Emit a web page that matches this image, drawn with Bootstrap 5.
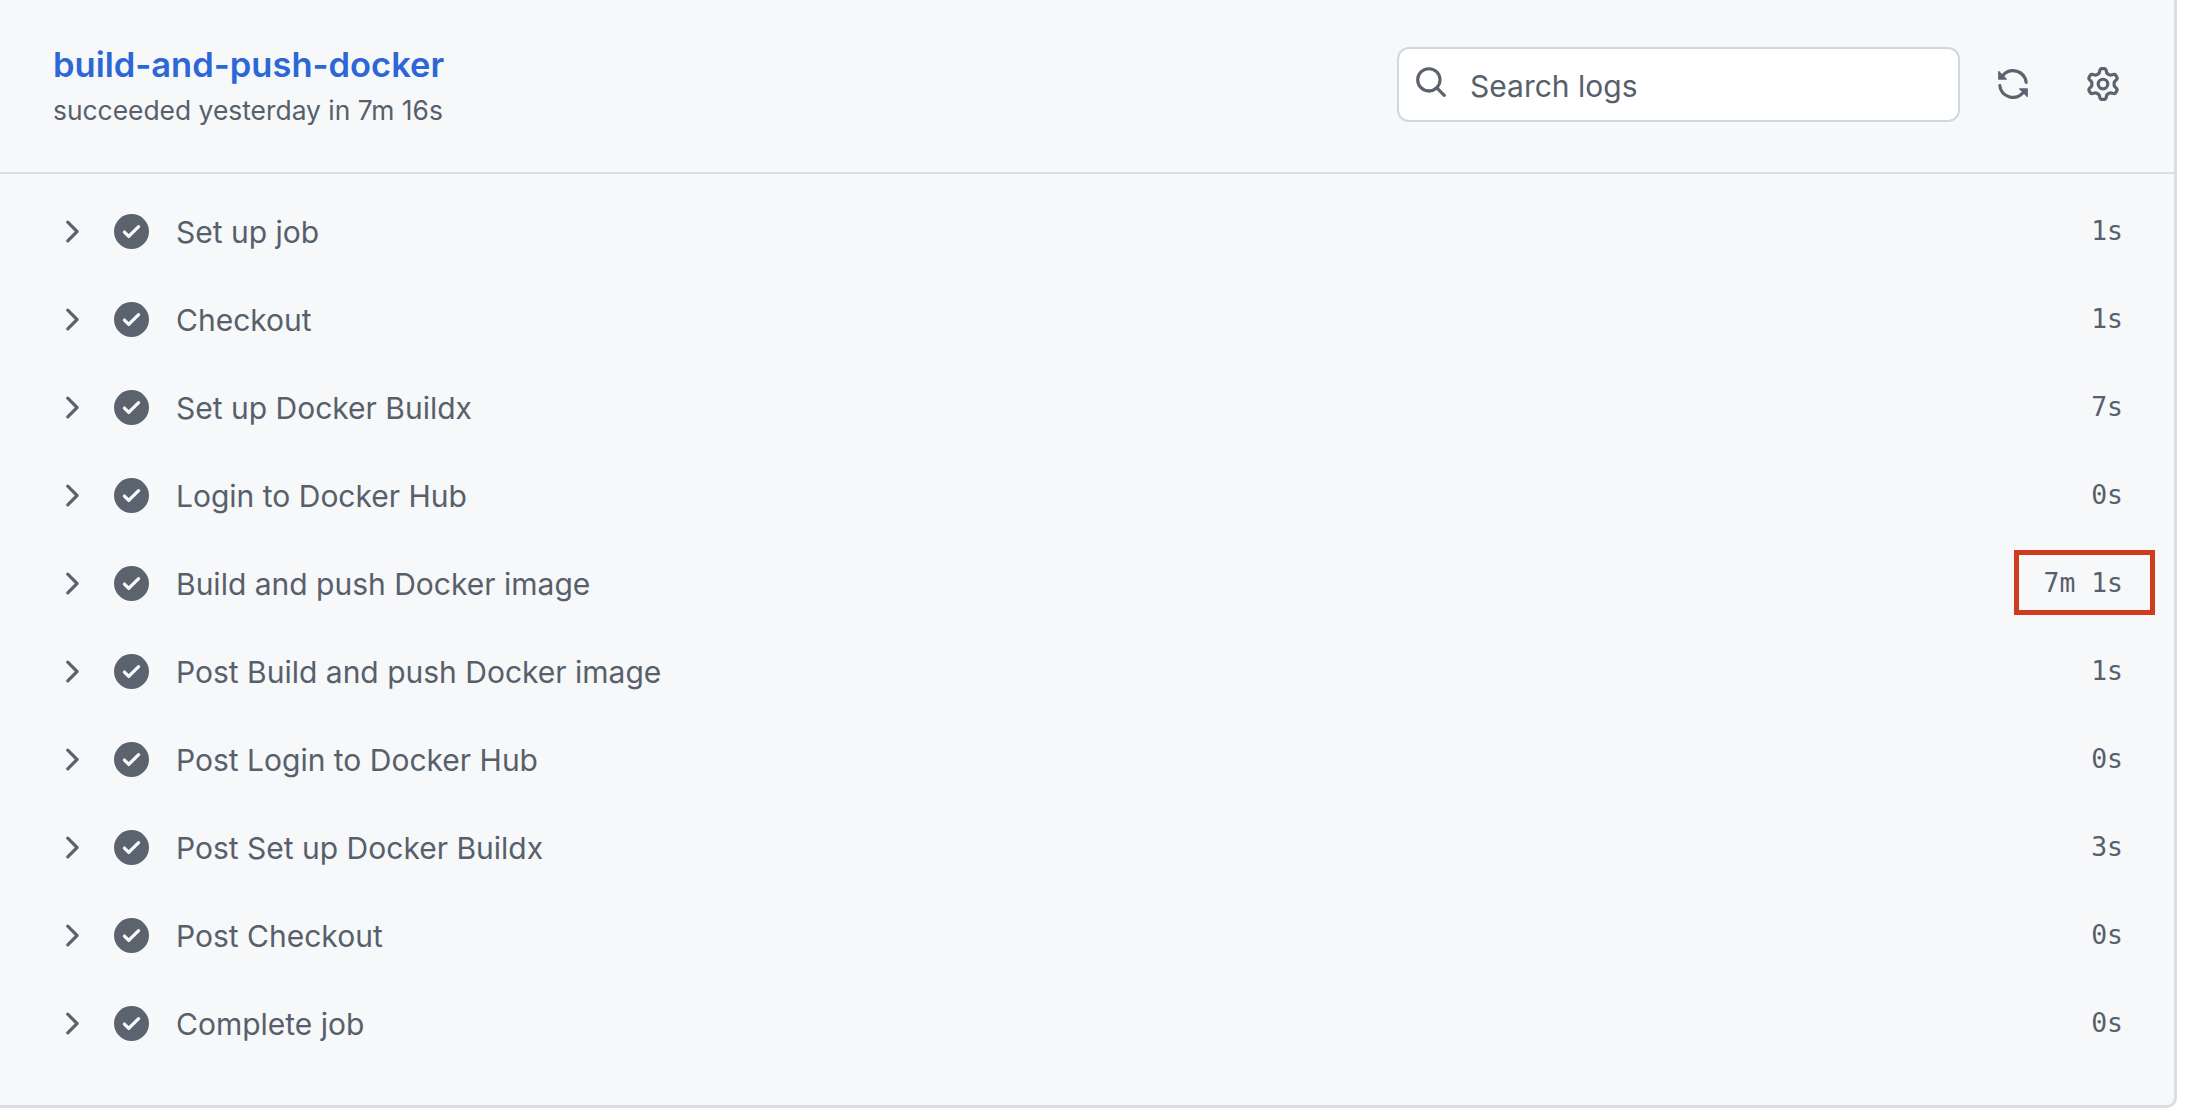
<!DOCTYPE html>
<html lang="en">
<head>
  <meta charset="UTF-8">
  <meta name="viewport" content="width=device-width, initial-scale=1.0">
  <title>build-and-push-docker</title>
  <link rel="stylesheet" href="https://cdn.jsdelivr.net/npm/bootstrap@5.3.0/dist/css/bootstrap.min.css">
  <style>
    html, body { background: #fff; margin: 0; }
    body { font-family: Inter, "Liberation Sans", sans-serif; color: #57606a; }
    .job-panel { width: 2177px; height: 1108px; background: #f6f8fa; border-right: 3px solid #d8dee4; border-bottom: 3px solid #d8dee4; border-bottom-right-radius: 10px; }
    .job-head { height: 174px; padding: 0 54px 0 53px; border-bottom: 2px solid #d8dee4; }
    .job-title { font-size: 34.5px; font-weight: 600; line-height: 44px; color: #2d67d6; margin: 0; text-decoration: none; display: block; }
    .job-sub { font-size: 26.4px; line-height: 45px; padding-top: 1px; }
    .job-text { padding-top: 3px; }
    .job-actions { padding-bottom: 3px; }
    .search-box { width: 563px; height: 75px; }
    .search-box .form-control { height: 75px; border: 2px solid #d0d7de; border-radius: 12px; padding: 2px 16px 0 71px; font-size: 30px; color: #57606a; background: #fff; box-shadow: none; }
    .search-box .form-control::placeholder { color: #57606a; opacity: 1; }
    .search-icon { left: 17px; top: 18px; }
    .job-tools { gap: 56px; margin-left: 36px; margin-bottom: 2px; }
    .step-list { padding: 13px 0 0 0; }
    .step-row { height: 88px; padding: 0 51px 0 53px; background: transparent; border: 0; color: #57606a; font-size: 30px; }
    .step-check { margin: 0 27px 0 26px; }
    .step-name { padding-top: 2px; }
    .step-time { font-family: "DejaVu Sans Mono", "Liberation Mono", monospace; font-size: 26.4px; }
    .red-box { right: 19px; top: 11px; width: 141px; height: 65px; border: 5px solid #d03a1f; }
    svg { fill: #5b646e; display: block; flex: none; }
  </style>
</head>
<body>
  <div class="job-panel">
    <div class="job-head d-flex align-items-center justify-content-between">
      <div class="job-text">
        <a class="job-title" href="#">build-and-push-docker</a>
        <div class="job-sub">succeeded yesterday in 7m 16s</div>
      </div>
      <div class="job-actions d-flex align-items-center">
        <div class="search-box position-relative">
          <svg class="search-icon position-absolute" width="34" height="34" viewBox="0 0 16 16"><path d="M10.68 11.74a6 6 0 0 1-7.922-8.982 6 6 0 0 1 8.982 7.922l3.04 3.04a.749.749 0 0 1-.326 1.275.749.749 0 0 1-.734-.215ZM11.5 7a4.499 4.499 0 1 0-8.997 0A4.499 4.499 0 0 0 11.5 7Z"/></svg>
          <input class="form-control" type="text" placeholder="Search logs">
        </div>
        <div class="job-tools d-flex align-items-center">
          <svg width="34" height="34" viewBox="0 0 16 16"><path d="M1.705 8.005a.75.75 0 0 1 .834.656 5.5 5.5 0 0 0 9.592 2.97l-1.204-1.204a.25.25 0 0 1 .177-.427h3.646a.25.25 0 0 1 .25.25v3.646a.25.25 0 0 1-.427.177l-1.38-1.38A7.002 7.002 0 0 1 1.05 8.84a.75.75 0 0 1 .656-.834ZM8 2.5a5.487 5.487 0 0 0-4.131 1.869l1.204 1.204A.25.25 0 0 1 4.896 6H1.25A.25.25 0 0 1 1 5.75V2.104a.25.25 0 0 1 .427-.177l1.38 1.38A7.002 7.002 0 0 1 14.95 7.16a.75.75 0 0 1-1.49.178A5.5 5.5 0 0 0 8 2.5Z"/></svg>
          <svg width="34" height="34" viewBox="0 0 16 16"><path d="M8 0a8.2 8.2 0 0 1 .701.031C9.444.095 9.99.645 10.16 1.29l.288 1.107c.018.066.079.158.212.224.231.114.454.243.668.386.123.082.233.09.299.071l1.103-.303c.644-.176 1.392.021 1.82.63.27.385.506.792.704 1.218.315.675.111 1.422-.364 1.891l-.814.806c-.049.048-.098.147-.088.294.016.257.016.515 0 .772-.01.147.038.246.088.294l.814.806c.475.469.679 1.216.364 1.891a7.977 7.977 0 0 1-.704 1.217c-.428.61-1.176.807-1.82.63l-1.102-.302c-.067-.019-.177-.011-.3.071a5.909 5.909 0 0 1-.668.386c-.133.066-.194.158-.211.224l-.29 1.106c-.168.646-.715 1.196-1.458 1.26a8.006 8.006 0 0 1-1.402 0c-.743-.064-1.289-.614-1.458-1.26l-.289-1.106c-.018-.066-.079-.158-.212-.224a5.738 5.738 0 0 1-.668-.386c-.123-.082-.233-.09-.299-.071l-1.103.303c-.644.176-1.392-.021-1.82-.63a8.12 8.12 0 0 1-.704-1.218c-.315-.675-.111-1.422.363-1.891l.815-.806c.05-.048.098-.147.088-.294a6.214 6.214 0 0 1 0-.772c.01-.147-.038-.246-.088-.294l-.815-.806C.635 6.045.431 5.298.746 4.623a7.92 7.92 0 0 1 .704-1.217c.428-.61 1.176-.807 1.82-.63l1.102.302c.067.019.177.011.3-.071.214-.143.437-.272.668-.386.133-.066.194-.158.211-.224l.29-1.106C6.009.645 6.556.095 7.299.03 7.53.01 7.764 0 8 0Zm-.571 1.525c-.036.003-.108.036-.137.146l-.289 1.105c-.147.561-.549.967-.998 1.189-.173.086-.34.183-.5.29-.417.278-.97.423-1.529.27l-1.103-.303c-.109-.03-.175.016-.195.045-.22.312-.412.644-.573.99-.014.031-.021.11.059.19l.815.806c.411.406.562.957.53 1.456a4.709 4.709 0 0 0 0 .582c.032.499-.119 1.05-.53 1.456l-.815.806c-.081.08-.073.159-.059.19.162.346.353.677.573.989.02.03.085.076.195.046l1.102-.303c.56-.153 1.113-.008 1.53.27.161.107.328.204.501.29.447.222.85.629.997 1.189l.289 1.105c.029.109.101.143.137.146a6.6 6.6 0 0 0 1.142 0c.036-.003.108-.036.137-.146l.289-1.105c.147-.561.549-.967.998-1.189.173-.086.34-.183.5-.29.417-.278.97-.423 1.529-.27l1.103.303c.109.029.175-.016.195-.045.22-.313.411-.644.573-.99.014-.031.021-.11-.059-.19l-.815-.806c-.411-.406-.562-.957-.53-1.456a4.709 4.709 0 0 0 0-.582c-.032-.499.119-1.05.53-1.456l.815-.806c.081-.08.073-.159.059-.19a6.464 6.464 0 0 0-.573-.989c-.02-.03-.085-.076-.195-.046l-1.102.303c-.56.153-1.113.008-1.53-.27a4.44 4.44 0 0 0-.501-.29c-.447-.222-.85-.629-.997-1.189l-.289-1.105c-.029-.11-.101-.143-.137-.146a6.6 6.6 0 0 0-1.142 0ZM11 8a3 3 0 1 1-6 0 3 3 0 0 1 6 0ZM9.5 8a1.5 1.5 0 1 0-3.001.001A1.5 1.5 0 0 0 9.5 8Z"/></svg>
        </div>
      </div>
    </div>
    <div id="steps" class="step-list list-group list-group-flush"></div>
  </div>
  <script src="https://cdn.jsdelivr.net/npm/bootstrap@5.3.0/dist/js/bootstrap.bundle.min.js"></script>
  <script>
    const steps = [
      ['Set up job', '1s'],
      ['Checkout', '1s'],
      ['Set up Docker Buildx', '7s'],
      ['Login to Docker Hub', '0s'],
      ['Build and push Docker image', '7m 1s', true],
      ['Post Build and push Docker image', '1s'],
      ['Post Login to Docker Hub', '0s'],
      ['Post Set up Docker Buildx', '3s'],
      ['Post Checkout', '0s'],
      ['Complete job', '0s'],
    ];
    const chevron = '<svg width="35" height="35" viewBox="0 0 16 16"><path d="M6.22 3.22a.75.75 0 0 1 1.06 0l4.25 4.25a.75.75 0 0 1 0 1.06l-4.25 4.25a.751.751 0 0 1-1.042-.018.751.751 0 0 1-.018-1.042L9.94 8 6.22 4.28a.75.75 0 0 1 0-1.06Z"/></svg>';
    const check = '<svg class="step-check" width="35" height="35" viewBox="0 0 16 16"><path d="M8 16A8 8 0 1 1 8 0a8 8 0 0 1 0 16Zm3.78-9.72a.751.751 0 0 0-.018-1.042.751.751 0 0 0-1.042-.018L6.75 9.19 5.28 7.72a.751.751 0 0 0-1.042.018.751.751 0 0 0-.018 1.042l2 2a.75.75 0 0 0 1.06 0Z"/></svg>';
    document.getElementById('steps').innerHTML = steps.map(s => `
      <div class="step-row list-group-item d-flex align-items-center position-relative">
        ${chevron}${check}
        <span class="step-name flex-grow-1">${s[0]}</span>
        <span class="step-time">${s[1]}</span>
        ${s[2] ? '<div class="red-box position-absolute"></div>' : ''}
      </div>`).join('');
  </script>
</body>
</html>
